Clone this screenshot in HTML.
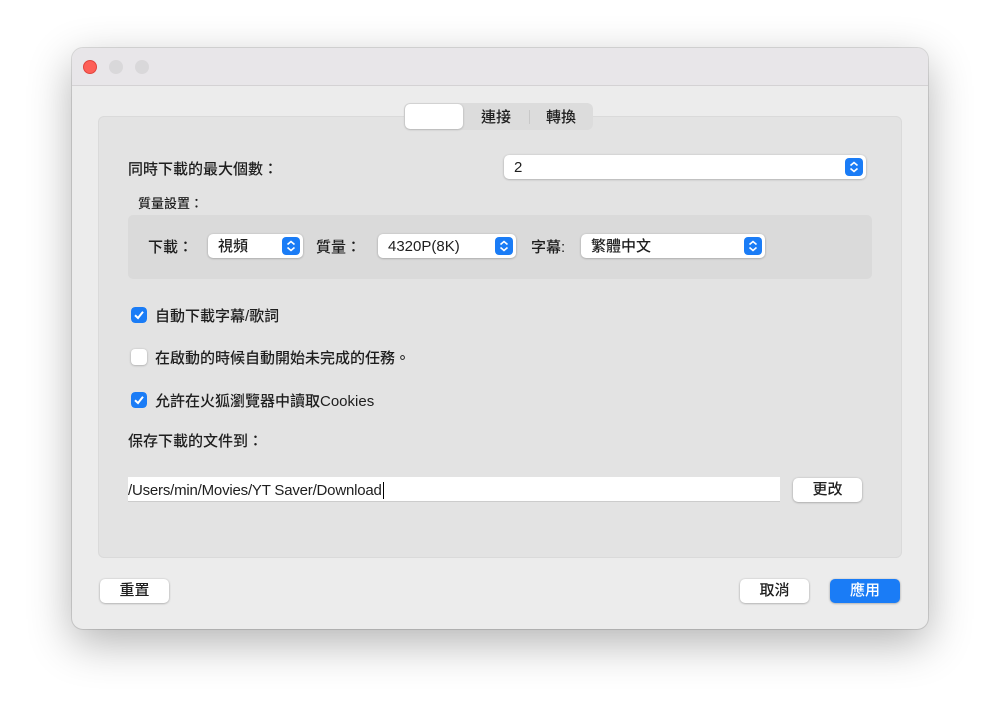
<!DOCTYPE html>
<html><head><meta charset="utf-8"><style>
*{margin:0;padding:0;box-sizing:border-box}
body{width:1000px;height:725px;background:#fff;font-family:"Liberation Sans","Noto Sans CJK TC",sans-serif;font-size:15px;font-weight:500;color:#1e1e1e;position:relative;overflow:hidden}
.a{position:absolute}
.win{left:72px;top:48px;width:856px;height:581px;border-radius:11px;background:#ececec;box-shadow:0 14px 44px rgba(0,0,0,.3),0 0 0 1px rgba(0,0,0,.12);overflow:hidden}
.title{left:0;top:0;width:856px;height:38px;background:#e8e6e9;border-bottom:1px solid #d4d2d4}
.dot{width:14px;height:14px;border-radius:50%;top:12px}
.panel{left:26px;top:68px;width:804px;height:442px;background:#e3e3e3;border-radius:6px;border:1px solid #dadada}
.sel{background:#fff;border-radius:5px;box-shadow:0 0.5px 2px rgba(0,0,0,.3);height:24px;line-height:26px;padding-left:10px}
.arr{position:absolute;right:3px;top:3px;width:18px;height:18px;border-radius:4px;background:#1a7cf6}
.cb{width:16px;height:16px;border-radius:4px}
.btn{background:#fff;border-radius:5px;box-shadow:0 0.5px 2px rgba(0,0,0,.35);height:24px;line-height:24px;text-align:center}
</style></head><body>
<div class="a win">
 <div class="a title"></div>
 <div class="a dot" style="left:11px;background:#fe5f57;border:1px solid #e0443e"></div>
 <div class="a dot" style="left:37px;background:#d9d8da"></div>
 <div class="a dot" style="left:63px;background:#d9d8da"></div>
 <div class="a panel"></div>
 <div class="a" style="left:332px;top:55px;width:189px;height:27px;background:#dcdcdc;border-radius:6px"></div>
 <div class="a" style="left:333px;top:56px;width:58px;height:25px;background:#fff;border-radius:5px;box-shadow:0 0.5px 2px rgba(0,0,0,.25)"></div>
 <div class="a" style="left:409px;top:58px">連接</div>
 <div class="a" style="left:457px;top:62px;width:1px;height:14px;background:#c8c8c8"></div>
 <div class="a" style="left:474px;top:58px">轉換</div>

 <div class="a" style="left:56px;top:110px">同時下載的最大個數：</div>
 <div class="a sel" style="left:432px;top:107px;width:362px">2<svg class="arr" viewBox="0 0 18 18"><path d="M5.5 7.5L9 4.5L12.5 7.5M5.5 10.5L9 13.5L12.5 10.5" fill="none" stroke="#fff" stroke-width="1.6"/></svg></div>
 <div class="a" style="left:66px;top:145px;font-size:13px">質量設置：</div>
 <div class="a" style="left:56px;top:167px;width:744px;height:64px;background:#dadada;border-radius:5px"></div>
 <div class="a" style="left:76px;top:188px">下載：</div>
 <div class="a sel" style="left:136px;top:186px;width:95px">視頻<svg class="arr" viewBox="0 0 18 18"><path d="M5.5 7.5L9 4.5L12.5 7.5M5.5 10.5L9 13.5L12.5 10.5" fill="none" stroke="#fff" stroke-width="1.6"/></svg></div>
 <div class="a" style="left:244px;top:188px">質量：</div>
 <div class="a sel" style="left:306px;top:186px;width:138px">4320P(8K)<svg class="arr" viewBox="0 0 18 18"><path d="M5.5 7.5L9 4.5L12.5 7.5M5.5 10.5L9 13.5L12.5 10.5" fill="none" stroke="#fff" stroke-width="1.6"/></svg></div>
 <div class="a" style="left:459px;top:188px">字幕:</div>
 <div class="a sel" style="left:509px;top:186px;width:184px">繁體中文<svg class="arr" viewBox="0 0 18 18"><path d="M5.5 7.5L9 4.5L12.5 7.5M5.5 10.5L9 13.5L12.5 10.5" fill="none" stroke="#fff" stroke-width="1.6"/></svg></div>

 <svg class="a cb" style="left:59px;top:259px" viewBox="0 0 16 16"><rect width="16" height="16" rx="4" fill="#1a7cf6"/><path d="M4 8.3L7 11L12 4.8" fill="none" stroke="#fff" stroke-width="2"/></svg>
 <div class="a" style="left:83px;top:257px">自動下載字幕/歌詞</div>
 <div class="a cb" style="left:59px;top:301px;background:#fff;box-shadow:0 0.5px 2px rgba(0,0,0,.3)"></div>
 <div class="a" style="left:83px;top:299px">在啟動的時候自動開始未完成的任務。</div>
 <svg class="a cb" style="left:59px;top:344px" viewBox="0 0 16 16"><rect width="16" height="16" rx="4" fill="#1a7cf6"/><path d="M4 8.3L7 11L12 4.8" fill="none" stroke="#fff" stroke-width="2"/></svg>
 <div class="a" style="left:83px;top:342px">允許在火狐瀏覽器中讀取Cookies</div>
 <div class="a" style="left:56px;top:382px">保存下載的文件到：</div>
 <div class="a" style="left:56px;top:429px;width:652px;height:25px;background:#fff;border-bottom:1px solid #ccc;line-height:27px;letter-spacing:-0.2px">/Users/min/Movies/YT Saver/Download<span style="border-left:1px solid #000;margin-left:1px"></span></div>
 <div class="a btn" style="left:721px;top:430px;width:69px">更改</div>

 <div class="a btn" style="left:28px;top:531px;width:69px">重置</div>
 <div class="a btn" style="left:668px;top:531px;width:69px">取消</div>
 <div class="a btn" style="left:758px;top:531px;width:70px;background:#1a7cf6;color:#fff">應用</div>
</div>
</body></html>
